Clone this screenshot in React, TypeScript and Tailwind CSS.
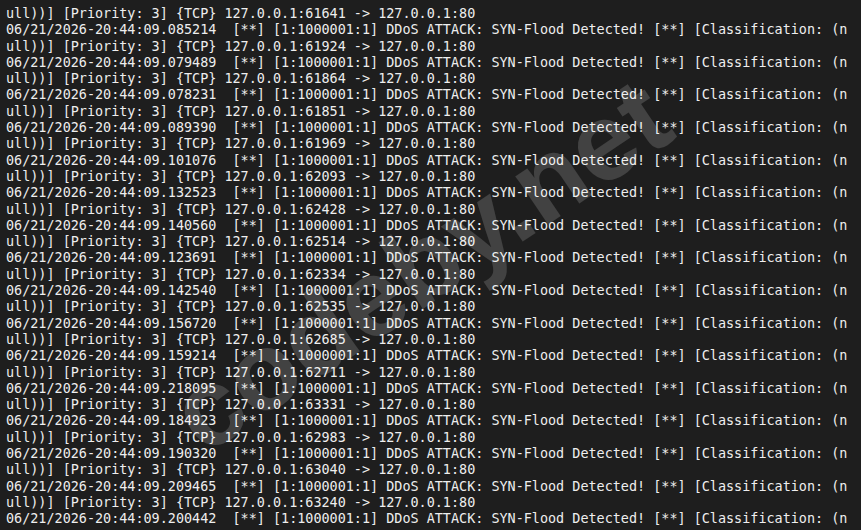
const entries = [
  { ts: '085214', port: '61924' },
  { ts: '079489', port: '61864' },
  { ts: '078231', port: '61851' },
  { ts: '089390', port: '61969' },
  { ts: '101076', port: '62093' },
  { ts: '132523', port: '62428' },
  { ts: '140560', port: '62514' },
  { ts: '123691', port: '62334' },
  { ts: '142540', port: '62535' },
  { ts: '156720', port: '62685' },
  { ts: '159214', port: '62711' },
  { ts: '218095', port: '63331' },
  { ts: '184923', port: '62983' },
  { ts: '190320', port: '63040' },
  { ts: '209465', port: '63240' },
  { ts: '200442', port: '' },
]

const tail = (port: string) => `ull))] [Priority: 3] {TCP} 127.0.0.1:${port} -> 127.0.0.1:80`
const head = (ts: string) =>
  `06/21/2026-20:44:09.${ts}  [**] [1:1000001:1] DDoS ATTACK: SYN-Flood Detected! [**] [Classification: (n`

const App = () => {
  // terminal wraps at 104 columns, so each alert spans two rows
  const lines: string[] = [tail('61641')]
  entries.forEach((e) => {
    lines.push(head(e.ts))
    if (e.port) lines.push(tail(e.port))
  })

  return (
    <div className="relative h-[530px] w-full overflow-hidden bg-[#1e1e1e]">
      <div className="flex flex-col pl-[6px] pt-[6px] font-['DejaVu_Sans_Mono',monospace] text-[13.45px] leading-[16.29px] text-[#eeeeee]">
        {lines.map((l, i) => (
          <div key={i} className="whitespace-pre">
            {l}
          </div>
        ))}
      </div>

      {/* watermark */}
      <div className="pointer-events-none absolute left-[420px] top-[265px] -translate-x-1/2 -translate-y-1/2 -rotate-[34deg] whitespace-nowrap font-['Liberation_Sans',Arial,sans-serif] text-[110px] font-bold leading-none text-white/[0.16]">
        codeby.net
      </div>
    </div>
  )
}

export default App
